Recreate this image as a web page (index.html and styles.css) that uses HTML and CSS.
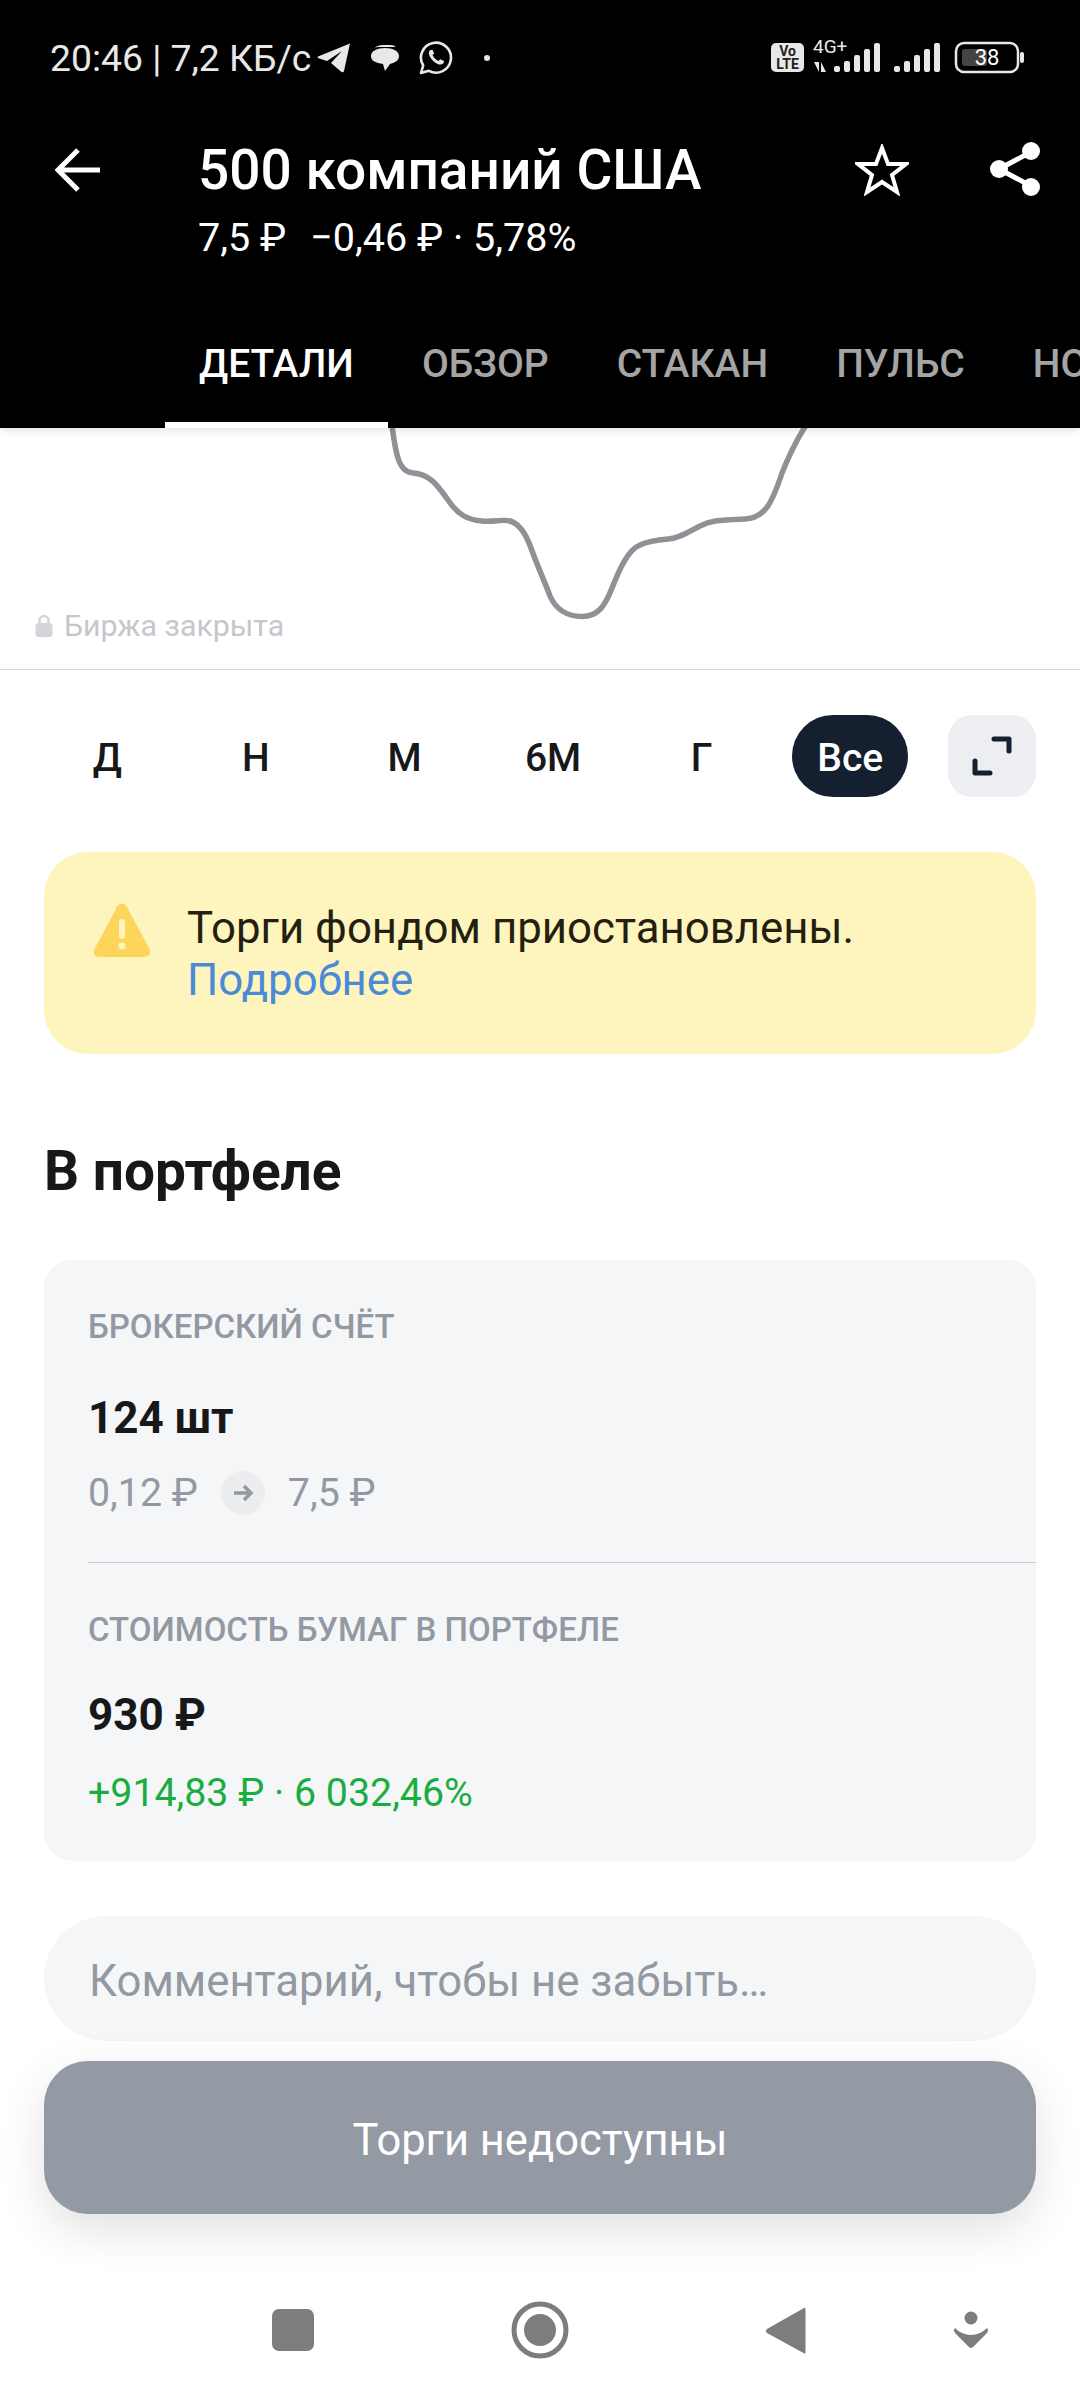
FILE: index.html
```html
<!DOCTYPE html>
<html lang="ru">
<head>
    <meta charset="UTF-8">
    <meta name="viewport" content="width=device-width, initial-scale=1.0">
    <title>500 компаний США</title>
    <link rel="stylesheet" href="styles.css">
</head>
<body>

    <header class="topbar">
        <div class="status-bar">
            <div class="status-left">
                <span class="status-text">20:46 | 7,2 КБ/с</span>
                <svg class="ic-telegram" width="34" height="30" viewBox="0 0 34 30"><path d="M33 0.5 L1 13.5 Q0 14.5 1.5 15.2 L10 18 L25 8 L14 20 L24.500 29 Q26.500 30 27 28 Z" fill="#e8e8e8"/></svg>
                <svg class="ic-bubble" width="30" height="28" viewBox="0 0 30 28"><path d="M4 5 Q6 1 14 1 L20 1 Q24 1 26 3 L8 3 Q5 3 4 5 Z" fill="#e8e8e8"/><path d="M15 4 C23 4 29 7 29 12 C29 17 24 19 20 20 L15 27 L13 20 C6 19 1 17 1 12 C1 7 7 4 15 4 Z" fill="#e8e8e8"/></svg>
                <svg class="ic-whatsapp" width="34" height="34" viewBox="0 0 34 34"><path d="M2 32 L4.200 24.500 A15 15 0 1 1 9.800 29.800 Z" fill="none" stroke="#e8e8e8" stroke-width="2.600" stroke-linejoin="round"/><path d="M11.500 9 C9.500 10 9.300 13 11.500 16.500 C14 20.500 18.500 24 22 23.500 C24 23.200 25.300 21.500 25 20 L21.300 18.200 L19.500 20 C17 19 14.500 16.500 13.500 14 L15.200 12.300 L13.500 9 Z" fill="#e8e8e8"/></svg>
                <span class="status-dot"></span>
            </div>
            <svg class="status-right" width="256" height="36" viewBox="0 0 256 36">
                <rect x="0" y="5" width="33" height="29" rx="5" fill="#e8e8e8"/>
                <text class="volte" x="16.500" y="18" text-anchor="middle">Vo</text>
                <text class="volte" x="16.500" y="31" text-anchor="middle">LTE</text>
                <text class="net" x="42" y="15">4G+</text>
                <path d="M43 24 L48 24 L48 34 Z M50 24 L55 34 L50 34 Z" fill="#e8e8e8"/>
                <g fill="#e8e8e8">
                    <rect x="63" y="28" width="6" height="6" rx="2"/>
                    <rect x="73" y="23" width="6" height="11" rx="2"/>
                    <rect x="83" y="17" width="6" height="17" rx="2"/>
                    <rect x="93" y="11" width="6" height="23" rx="2"/>
                    <rect x="103" y="5" width="6" height="29" rx="2"/>
                    <rect x="123" y="28" width="6" height="6" rx="2"/>
                    <rect x="133" y="23" width="6" height="11" rx="2"/>
                    <rect x="143" y="17" width="6" height="17" rx="2"/>
                    <rect x="153" y="11" width="6" height="23" rx="2"/>
                    <rect x="163" y="5" width="6" height="29" rx="2"/>
                </g>
                <rect x="185" y="5" width="62" height="29" rx="8" fill="none" stroke="#e8e8e8" stroke-width="2.500"/>
                <rect x="191" y="11" width="25" height="17" rx="3" fill="#444"/>
                <rect x="249" y="14" width="4" height="11" rx="2" fill="#e8e8e8"/>
                <text class="batt" x="216" y="27" text-anchor="middle">38</text>
            </svg>
        </div>

        <div class="title-row">
            <svg class="back-icon" width="46" height="44" viewBox="0 0 46 44"><path d="M45 22 H4 M23 2 L3 22 L23 42" fill="none" stroke="#fff" stroke-width="5"/></svg>
            <div class="title-text">
                <h1>500 компаний США</h1>
                <div class="subtitle"><span>7,5 ₽</span><span>−0,46 ₽ · 5,78%</span></div>
            </div>
            <svg class="star-icon" width="54" height="52" viewBox="0 0 54 52"><path d="M27 4 L33 20 L51 20 L37 31 L42 48 L27 38 L12 48 L17 31 L3 20 L21 20 Z" fill="none" stroke="#fff" stroke-width="4" stroke-linejoin="miter"/></svg>
            <svg class="share-icon" width="50" height="54" viewBox="0 0 50 54"><path d="M41 10 L9 27 L41 44" fill="none" stroke="#fff" stroke-width="5"/><circle cx="41" cy="9" r="9" fill="#fff"/><circle cx="9" cy="27" r="9" fill="#fff"/><circle cx="41" cy="45" r="9" fill="#fff"/></svg>
        </div>

        <nav class="tabs">
            <a class="tab active">ДЕТАЛИ</a>
            <a class="tab">ОБЗОР</a>
            <a class="tab">СТАКАН</a>
            <a class="tab">ПУЛЬС</a>
            <a class="tab">НОВОСТИ</a>
        </nav>
    </header>

    <section class="chart">
        <svg class="chart-line" width="1080" height="240" viewBox="0 0 1080 240">
            <path d="M392 -2 C396 28 399 44 413 45 C430 46 438 58 448 72 C458 87 468 92 482 93 C495 94 503 91 510 93 C520 96 526 106 531 120 C537 137 544 152 550 168 C556 182 568 188.500 582 188.500 C598 188.500 605 178 612 160 C620 140 628 122 640 117 C648 113 656 112 668 111 C680 110 688 104 700 98 C712 92 722 92 745 91 C765 90 772 75 782 45 C790 25 798 8 811 -10" fill="none" stroke="#8f9196" stroke-width="5.500" stroke-linecap="round"/>
        </svg>
        <div class="market-closed">
            <svg width="18" height="24" viewBox="0 0 18 24"><path d="M4.500 10 V6.500 A4.500 4.500 0 0 1 13.500 6.500 V10" fill="none" stroke="#d3d5da" stroke-width="2.500"/><rect x="0.500" y="9" width="17" height="14" rx="3" fill="#d3d5da"/></svg>
            <span>Биржа закрыта</span>
        </div>
    </section>

    <div class="periods">
        <span class="period">Д</span>
        <span class="period">Н</span>
        <span class="period">М</span>
        <span class="period">6М</span>
        <span class="period">Г</span>
        <span class="period selected">Все</span>
        <button class="expand">
            <svg width="40" height="40" viewBox="0 0 40 40"><path d="M22 3 H37 V15 M3 25 V37 H18" fill="none" stroke="#141f30" stroke-width="5" stroke-linecap="round" stroke-linejoin="round"/></svg>
        </button>
    </div>

    <div class="notice">
        <svg class="notice-icon" width="60" height="56" viewBox="0 0 60 56"><path d="M30 2 C26 2 25 4 23 9 L3 46 C0 52 3 55 8 55 H52 C57 55 60 52 57 46 L37 9 C35 4 34 2 30 2 Z" fill="#fdd55a"/><rect x="27" y="17" width="6" height="20" rx="3" fill="#fff3bf"/><circle cx="30" cy="44" r="3.500" fill="#fff3bf"/></svg>
        <p>Торги фондом приостановлены.<br><a>Подробнее</a></p>
    </div>

    <h2 class="section-title">В портфеле</h2>

    <div class="portfolio">
        <div class="portfolio-part first">
            <div class="part-label">БРОКЕРСКИЙ СЧЁТ</div>
            <div class="part-value">124 шт</div>
            <div class="part-note prices">
                <span>0,12 ₽</span>
                <span class="arrow-dot">
                    <svg width="22" height="20" viewBox="0 0 22 20"><path d="M2 10 H19 M12 3 L19 10 L12 17" fill="none" stroke="#9299a2" stroke-width="3.500"/></svg>
                </span>
                <span>7,5 ₽</span>
            </div>
        </div>
        <div class="portfolio-part second">
            <div class="part-label">СТОИМОСТЬ БУМАГ В ПОРТФЕЛЕ</div>
            <div class="part-value">930 ₽</div>
            <div class="part-note green">+914,83 ₽ · 6 032,46%</div>
        </div>
    </div>

    <div class="comment">Комментарий, чтобы не забыть…</div>

    <button class="trade-button">Торги недоступны</button>

    <footer class="navbar">
        <svg width="42" height="42" viewBox="0 0 42 42" class="nav-square"><rect width="42" height="42" rx="7" fill="#7d7d7d"/></svg>
        <svg width="58" height="58" viewBox="0 0 58 58" class="nav-home"><circle cx="29" cy="29" r="26" fill="none" stroke="#7d7d7d" stroke-width="5"/><circle cx="29" cy="29" r="16" fill="#7d7d7d"/></svg>
        <svg width="42" height="50" viewBox="0 0 42 50" class="nav-back"><path d="M39 2 Q40.500 1 40.500 4 V46 Q40.500 49 38.500 47 L2 27 Q0 25 2 23 Z" fill="#7d7d7d"/></svg>
        <svg width="36" height="38" viewBox="0 0 36 38" class="nav-extra"><circle cx="18" cy="7" r="6.500" fill="#7d7d7d"/><path d="M2 17 Q9 24 18 24 Q27 24 34 17 Q36 19 34 22 L20 36 Q18 38 16 36 L2 22 Q0 19 2 17 Z" fill="#7d7d7d"/></svg>
    </footer>

</body>
</html>
```

FILE: styles.css
```css
* {
    box-sizing: border-box;
}

body {
    margin: 0;
    width: 1080px;
    height: 2400px;
    overflow: hidden;
    background: #fff;
    color: #17181a;
    font-family: Roboto, "Liberation Sans", sans-serif;
}

.topbar {
    background: #000;
    height: 428px;
    color: #fff;
    position: relative;
    z-index: 2;
    box-shadow: 0 2px 8px rgba(0, 0, 0, 0.12);
}

.status-bar {
    height: 116px;
    padding: 38px 53px 0 50px;
    display: flex;
    justify-content: space-between;
    align-items: flex-start;
}

.status-left {
    display: flex;
    align-items: center;
    height: 40px;
}

.status-text {
    font-size: 37.300px;
    color: #e8e8e8;
    line-height: 40px;
}

.ic-telegram { margin-left: 6px; }
.ic-bubble { margin-left: 19px; }
.ic-whatsapp { margin-left: 19px; }

.status-dot {
    width: 6px;
    height: 6px;
    border-radius: 50%;
    background: #e8e8e8;
    margin-left: 31px;
}

.volte {
    font-size: 14px;
    font-weight: 700;
    fill: #222;
    font-family: Roboto, sans-serif;
}

.net {
    font-size: 19px;
    fill: #e8e8e8;
    font-family: Roboto, sans-serif;
}

.batt {
    font-size: 22px;
    fill: #fff;
    font-family: Roboto, sans-serif;
}

.title-row {
    display: flex;
    align-items: flex-start;
    height: 212px;
}

.back-icon {
    margin: 32px 97px 0 55px;
    flex: none;
}

.title-text {
    flex: 1;
}

.title-text h1 {
    margin: 20px 0 0;
    font-size: 55px;
    font-weight: 500;
    line-height: 68px;
}

.subtitle {
    font-size: 39.500px;
    line-height: 46px;
    margin-top: 11px;
    display: flex;
    gap: 24px;
}

.star-icon {
    margin: 28px 81px 0 0;
    flex: none;
}

.share-icon {
    margin: 26px 40px 0 0;
    flex: none;
}

.tabs {
    display: flex;
    padding-left: 165px;
    height: 100px;
    overflow: hidden;
}

.tab {
    padding: 0 34px;
    font-size: 39px;
    font-weight: 500;
    line-height: 72px;
    color: #a5a5a5;
    white-space: nowrap;
    flex: none;
    height: 100px;
}

.tab.active {
    color: #fff;
    border-bottom: 6px solid #fff;
}

.chart {
    height: 242px;
    border-bottom: 1px solid #d5d6d9;
    position: relative;
}

.chart-line {
    display: block;
}

.market-closed {
    position: absolute;
    left: 35px;
    top: 183px;
    display: flex;
    align-items: center;
    gap: 11px;
    font-size: 30.300px;
    line-height: 30px;
    color: #c4c7cc;
}

.periods {
    display: grid;
    grid-template-columns: repeat(6, 148.600px) 88px;
    padding-left: 33px;
    margin-top: 45px;
    height: 82px;
    justify-content: start;
}

.period {
    font-size: 39px;
    font-weight: 500;
    line-height: 86px;
    height: 82px;
    text-align: center;
}

.period.selected {
    background: #141f30;
    color: #fff;
    border-radius: 41px;
    width: 116px;
    justify-self: center;
}

.expand {
    width: 88px;
    height: 82px;
    margin-left: 23px;
    padding: 0;
    border: none;
    border-radius: 24px;
    background: #eceef1;
    display: flex;
    align-items: center;
    justify-content: center;
}

.notice {
    margin: 55px 44px 0;
    height: 202px;
    background: #fef4bd;
    border-radius: 44px;
    padding: 50px 48px 0;
    display: flex;
    align-items: flex-start;
}

.notice-icon {
    flex: none;
    margin-right: 35px;
}

.notice p {
    margin: 0;
    font-size: 43.800px;
    line-height: 52px;
    color: #241f10;
}

.notice a {
    color: #4a8ad8;
}

.section-title {
    margin: 87px 44px 0;
    font-size: 55px;
    font-weight: 700;
    line-height: 60px;
}

.portfolio {
    margin: 59px 44px 0;
    height: 601px;
    background: #f5f6f8;
    border-radius: 28px;
    padding-left: 44px;
}

.portfolio-part.first {
    height: 303px;
    padding-top: 47px;
    border-bottom: 1px solid #c9ccd2;
}

.portfolio-part.second {
    padding-top: 47px;
}

.part-label {
    font-size: 33px;
    font-weight: 500;
    line-height: 40px;
    color: #9299a2;
}

.part-value {
    font-size: 44px;
    font-weight: 700;
    line-height: 50px;
    margin-top: 46px;
    color: #17181a;
}

.second .part-value {
    margin-top: 40px;
}

.part-note {
    font-size: 39.300px;
    line-height: 50px;
    margin-top: 25px;
    color: #9299a2;
}

.second .part-note {
    margin-top: 28px;
}

.prices {
    display: flex;
    align-items: center;
}

.arrow-dot {
    width: 44px;
    height: 44px;
    margin: 0 23px;
    border-radius: 50%;
    background: #ecedef;
    display: flex;
    align-items: center;
    justify-content: center;
}

.green {
    color: #1aad3f;
}

.comment {
    margin: 55px 44px 0;
    height: 125px;
    border-radius: 62px;
    background: #f5f6f8;
    padding-left: 45px;
    font-size: 43.700px;
    line-height: 130px;
    color: #9299a2;
}

.trade-button {
    display: block;
    width: 992px;
    height: 153px;
    margin: 20px 44px 0;
    padding: 5px 0 0;
    border: none;
    border-radius: 44px;
    background: #949aa4;
    color: #fff;
    font-family: Roboto, sans-serif;
    font-size: 43.500px;
    box-shadow: 0 16px 48px rgba(0, 0, 0, 0.12);
}

.navbar {
    position: relative;
    margin-top: 54px;
    height: 132px;
    background: #fff;
}

.navbar svg {
    position: absolute;
}

.nav-square { left: 272px; top: 41px; }
.nav-home { left: 511px; top: 33px; }
.nav-back { left: 765px; top: 38px; }
.nav-extra { left: 953px; top: 43px; }
```
